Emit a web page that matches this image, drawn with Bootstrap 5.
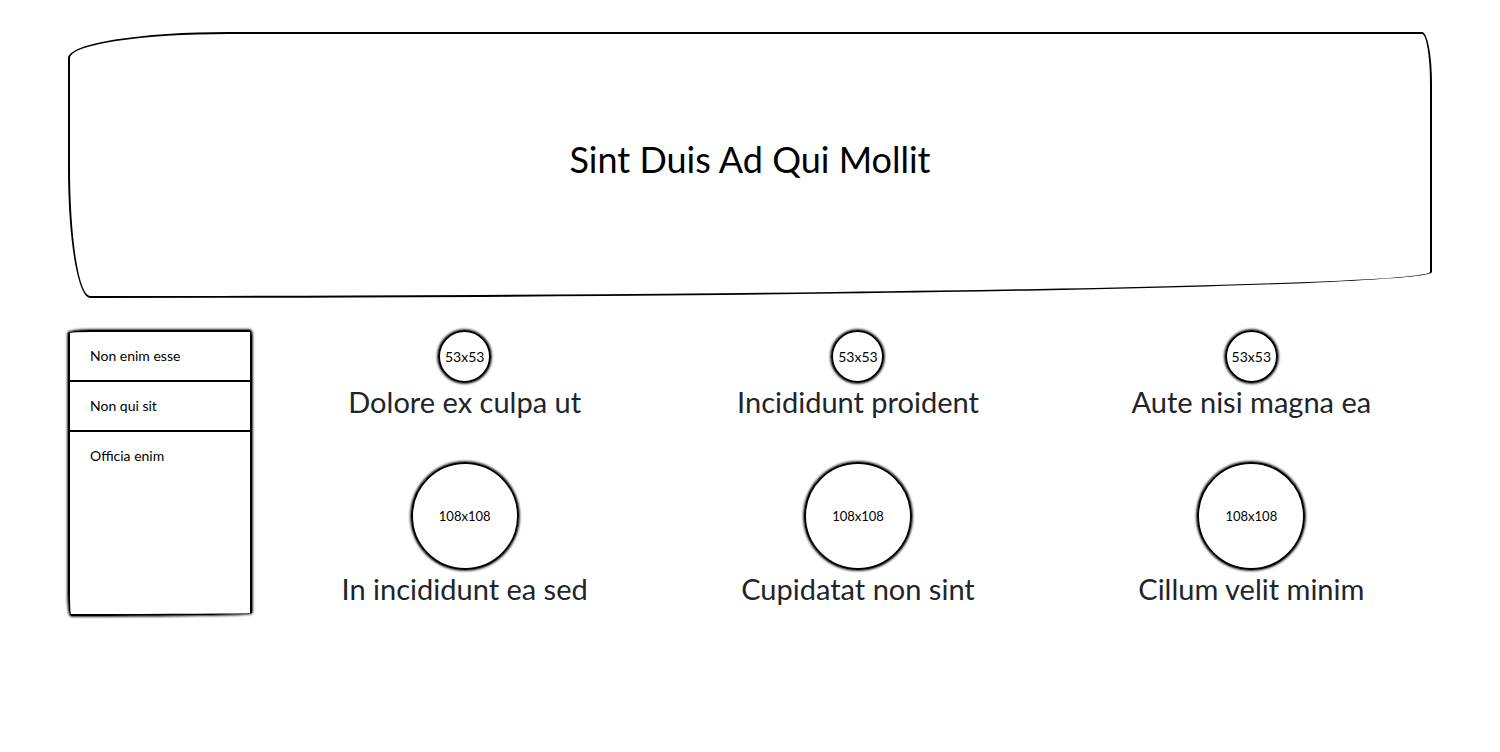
<!DOCTYPE html>
<html lang="la">
<head>
<meta charset="utf-8">
<meta name="viewport" content="width=device-width, initial-scale=1">
<title>Sint Duis Ad Qui Mollit</title>
<link href="https://cdn.jsdelivr.net/npm/bootstrap@5.3.0/dist/css/bootstrap.min.css" rel="stylesheet">
<style>
  body { font-family: "Lato", "Open Sans", sans-serif; }
  .page { padding: 32px 52px; }
  .banner {
    min-height: 266px;
    padding-bottom: 12px;
    margin-bottom: 32px;
    border: 2px solid #000;
    border-radius: 160px 10px 1342px 22px / 26px 52px 26px 130px;
    color: #000;
  }
  .banner h1 { font-size: 36px; line-height: 48px; }
  .side-menu {
    width: 184px;
    border: 2px solid #000;
    border-radius: 22px 2px 180px 3px / 3px 6px 3px 22px;
    box-shadow: 0 0 3px #000, 0 0 3px #000;
    font-size: 14px;
    line-height: 20px;
  }
  .side-menu a { padding: 14px 20px; color: #000; }
  .side-menu li + li { border-top: 2px solid #000; }
  .tiles { row-gap: 33px; }
  .tiles h2 { font-size: 29px; line-height: 38px; }
  .disc {
    width: 53px;
    height: 53px;
    border: 2px solid #000;
    box-shadow: 0 0 3px #000, 0 0 3px #000;
    color: #000;
    font-size: 14px;
    line-height: 20px;
  }
  .disc-lg { width: 108px; height: 108px; font-size: 13px; }
</style>
</head>
<body>
<div class="page">
  <header class="banner mx-3 d-flex align-items-center justify-content-center text-center">
    <h1 class="m-0 fw-normal">Sint Duis Ad Qui Mollit</h1>
  </header>
  <div class="d-flex">
    <nav class="side-menu mx-3 flex-shrink-0">
      <ul class="list-unstyled m-0">
        <li><a class="d-block text-decoration-none" href="#">Non enim esse</a></li>
        <li><a class="d-block text-decoration-none" href="#">Non qui sit</a></li>
        <li><a class="d-block text-decoration-none" href="#">Officia enim</a></li>
      </ul>
    </nav>
    <main class="tiles row g-0 flex-grow-1 text-center">
      <section class="col-4"><div class="disc rounded-circle mx-auto d-flex align-items-center justify-content-center">53x53</div><h2 class="mb-2 fw-normal">Dolore ex culpa ut</h2></section>
      <section class="col-4"><div class="disc rounded-circle mx-auto d-flex align-items-center justify-content-center">53x53</div><h2 class="mb-2 fw-normal">Incididunt proident</h2></section>
      <section class="col-4"><div class="disc rounded-circle mx-auto d-flex align-items-center justify-content-center">53x53</div><h2 class="mb-2 fw-normal">Aute nisi magna ea</h2></section>
      <section class="col-4"><div class="disc disc-lg rounded-circle mx-auto d-flex align-items-center justify-content-center">108x108</div><h2 class="mb-2 fw-normal">In incididunt ea sed</h2></section>
      <section class="col-4"><div class="disc disc-lg rounded-circle mx-auto d-flex align-items-center justify-content-center">108x108</div><h2 class="mb-2 fw-normal">Cupidatat non sint</h2></section>
      <section class="col-4"><div class="disc disc-lg rounded-circle mx-auto d-flex align-items-center justify-content-center">108x108</div><h2 class="mb-2 fw-normal">Cillum velit minim</h2></section>
    </main>
  </div>
</div>
<script src="https://cdn.jsdelivr.net/npm/bootstrap@5.3.0/dist/js/bootstrap.bundle.min.js"></script>
</body>
</html>
